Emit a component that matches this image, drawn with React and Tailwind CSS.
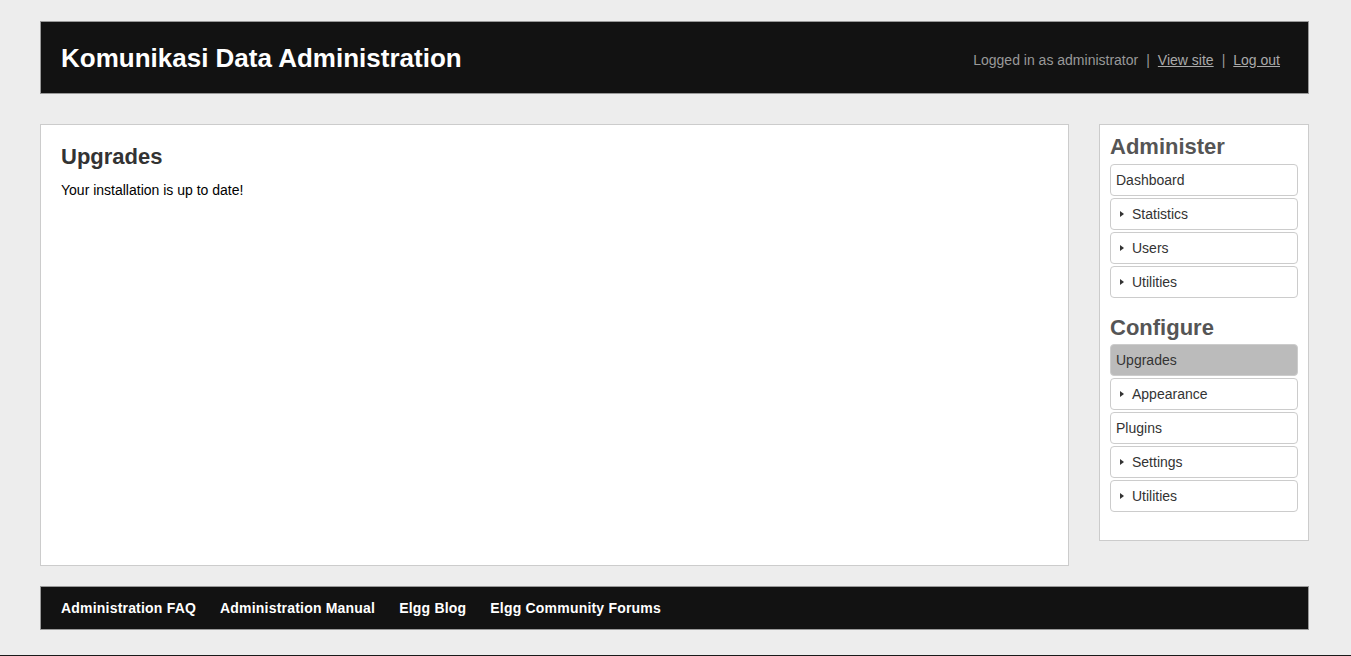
const administer = [
  { label: 'Dashboard' },
  { label: 'Statistics', sub: true },
  { label: 'Users', sub: true },
  { label: 'Utilities', sub: true },
];

const configure = [
  { label: 'Upgrades', selected: true },
  { label: 'Appearance', sub: true },
  { label: 'Plugins' },
  { label: 'Settings', sub: true },
  { label: 'Utilities', sub: true },
];

const footerLinks = ['Administration FAQ', 'Administration Manual', 'Elgg Blog', 'Elgg Community Forums'];

function MenuItem({ item }) {
  return (
    <li
      className={`flex items-center h-[32px] mb-[2px] border border-[#cccccc] rounded-[4px] pl-[5px] text-[14px] text-[#333333] ${
        item.selected ? 'bg-[#bbbbbb]' : 'bg-white'
      }`}
    >
      {item.sub && (
        <svg width="4" height="6" viewBox="0 0 4 6" className="ml-[4px] mr-[8px]">
          <path d="M0 0 L4 3 L0 6 Z" fill="#333333" />
        </svg>
      )}
      <span>{item.label}</span>
    </li>
  );
}

function MenuSection({ title, items, first }) {
  return (
    <div className={first ? '' : 'mt-[16px]'}>
      <h2 className={`text-[22px] leading-[28px] font-bold text-[#555555] ${first ? 'mb-[3px]' : 'mb-[2px]'}`}>
        {title}
      </h2>
      <ul>
        {items.map((item) => (
          <MenuItem key={title + item.label} item={item} />
        ))}
      </ul>
    </div>
  );
}

export default function App() {
  return (
    <div
      className="w-[1351px] h-[656px] bg-[#ededed] flex flex-col"
      style={{ fontFamily: '"Liberation Sans", Arial, sans-serif' }}
    >
      <div className="w-[1269px] ml-[40px] flex flex-col">
        {/* Header */}
        <header className="mt-[21px] h-[73px] bg-[#121212] border border-[#999999] flex items-center justify-between pl-[20px] pr-[28px]">
          <h1 className="text-[26px] leading-[32px] font-bold text-white">Komunikasi Data Administration</h1>
          <div className="mt-[5px] text-[14px] text-[#999999] flex items-center">
            <span>Logged in as administrator</span>
            <span className="mx-[8px]">|</span>
            <a href="#" className="underline text-[#aaaaaa]">View site</a>
            <span className="mx-[8px]">|</span>
            <a href="#" className="underline text-[#aaaaaa]">Log out</a>
          </div>
        </header>

        {/* Body */}
        <div className="mt-[30px] flex items-start gap-[30px]">
          <main className="w-[1029px] h-[442px] bg-white border border-[#cccccc] px-[20px] pt-[18px]">
            <h2 className="text-[22px] leading-[28px] font-bold text-[#333333]">Upgrades</h2>
            <p className="mt-[9px] text-[14px] leading-[20px] text-black">Your installation is up to date!</p>
          </main>

          <aside className="w-[210px] h-[417px] bg-white border border-[#cccccc] px-[10px] pt-[8px]">
            <MenuSection title="Administer" items={administer} first />
            <MenuSection title="Configure" items={configure} />
          </aside>
        </div>

        {/* Footer */}
        <footer className="mt-[20px] h-[44px] bg-[#121212] border border-[#999999] flex items-center pl-[20px] gap-[24px]">
          {footerLinks.map((l) => (
            <a key={l} href="#" className="text-[14px] font-bold tracking-[0.2px] text-white">
              {l}
            </a>
          ))}
        </footer>
      </div>
      <div className="mt-auto h-[1px] bg-[#1a1a1a]" />
    </div>
  );
}
